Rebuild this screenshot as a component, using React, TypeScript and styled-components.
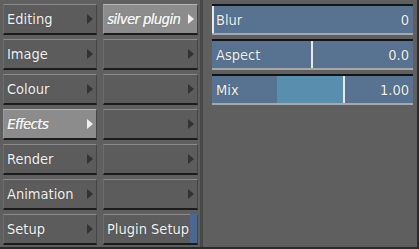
import React from 'react';
import styled, { createGlobalStyle } from 'styled-components';

const GlobalStyle = createGlobalStyle`
  html, body {
    margin: 0;
    padding: 0;
    background: #5e5e5e;
  }
`;

const Screen = styled.div`
  width: 419px;
  height: 249px;
  box-sizing: border-box;
  display: flex;
  background: #5f5f5f;
  border-right: 2px solid #2a2a2a;
  border-bottom: 2px solid #2a2a2a;
  font-family: "DejaVu Sans Condensed", "DejaVu Sans", sans-serif;
  font-size: 14.5px;
  color: #f4f4f4;
  overflow: hidden;
`;

const MenuColumn = styled.div<{ $width: number; $left: number }>`
  width: ${({ $width }) => $width}px;
  display: flex;
  flex-direction: column;
  gap: 4px;
  padding: 4px 0 0 ${({ $left }) => $left}px;
  box-sizing: content-box;
`;

const MenuButton = styled.div<{ $active?: boolean }>`
  height: 28px;
  display: flex;
  align-items: center;
  justify-content: space-between;
  padding: 0 3px 0 3px;
  background: ${({ $active }) => ($active ? '#8c8c8c' : '#5c5c5c')};
  border-top: 1px solid ${({ $active }) => ($active ? '#b4b4b4' : '#8a8a8a')};
  border-left: 1px solid ${({ $active }) => ($active ? '#9a9a9a' : '#6c6c6c')};
  border-right: 1px solid #454545;
  border-bottom: 2px solid #1c1c1c;
  font-style: ${({ $active }) => ($active ? 'italic' : 'normal')};
  letter-spacing: ${({ $active }) => ($active ? '-0.5px' : '0')};
  text-shadow: ${({ $active }) =>
    $active ? '0.4px 0 0 #f4f4f4, 0 0 1px rgba(0,0,0,0.5)' : '0 0 1px rgba(0, 0, 0, 0.5)'};
  white-space: nowrap;
`;

const Arrow = styled.span<{ $light?: boolean }>`
  width: 0;
  height: 0;
  border-top: 5px solid transparent;
  border-bottom: 5px solid transparent;
  border-left: 6px solid ${({ $light }) => ($light ? '#f0f0f0' : '#333333')};
`;

const SetupButton = styled(MenuButton)`
  padding-right: 0;
`;

const BlueTab = styled.span`
  width: 7px;
  align-self: stretch;
  margin-top: -1px;
  background: #4a6891;
`;

const Divider = styled.div`
  width: 3px;
  margin-left: 2px;
  background: #484848;
`;

const SliderPanel = styled.div`
  flex: 1;
  display: flex;
  flex-direction: column;
  gap: 4px;
  padding: 4px 4px 0 9px;
`;

const Slider = styled.div`
  position: relative;
  height: 27px;
  display: flex;
  align-items: center;
  justify-content: space-between;
  padding: 0 4px 0 4px;
  background: #587391;
  border-top: 2px solid #141414;
  border-bottom: 2px solid #a8a8a8;
  text-shadow: 0 0 1px rgba(0, 0, 0, 0.5);
`;

const Fill = styled.div`
  position: absolute;
  top: 0;
  bottom: 0;
  background: #5a8eae;
`;

const Handle = styled.div`
  position: absolute;
  top: 0;
  bottom: 0;
  width: 2px;
  background: #e8e8e8;
`;

const Label = styled.span`
  position: relative;
`;

const menu = [
  { label: 'Editing' },
  { label: 'Image' },
  { label: 'Colour' },
  { label: 'Effects', active: true },
  { label: 'Render' },
  { label: 'Animation' },
  { label: 'Setup' },
];

const sliders = [
  { label: 'Blur', value: '0', handle: 0 },
  { label: 'Aspect', value: '0.0', handle: 99 },
  { label: 'Mix', value: '1.00', handle: 131, fillFrom: 65 },
];

export default function App() {
  return (
    <>
      <GlobalStyle />
      <Screen>
        <MenuColumn $width={94} $left={3}>
          {menu.map((m) => (
            <MenuButton key={m.label} $active={m.active}>
              <span>{m.label}</span>
              <Arrow $light={m.active} />
            </MenuButton>
          ))}
        </MenuColumn>
        <MenuColumn $width={95} $left={6}>
          <MenuButton $active>
            <span>silver plugin</span>
            <Arrow $light />
          </MenuButton>
          {[1, 2, 3, 4, 5].map((i) => (
            <MenuButton key={i}>
              <span />
              <Arrow />
            </MenuButton>
          ))}
          <SetupButton>
            <span>Plugin Setup</span>
            <BlueTab />
          </SetupButton>
        </MenuColumn>
        <Divider />
        <SliderPanel>
          {sliders.map((s) => (
            <Slider key={s.label}>
              {s.fillFrom !== undefined && (
                <Fill style={{ left: s.fillFrom, width: s.handle - s.fillFrom }} />
              )}
              <Handle style={{ left: s.handle }} />
              <Label>{s.label}</Label>
              <Label>{s.value}</Label>
            </Slider>
          ))}
        </SliderPanel>
      </Screen>
    </>
  );
}
